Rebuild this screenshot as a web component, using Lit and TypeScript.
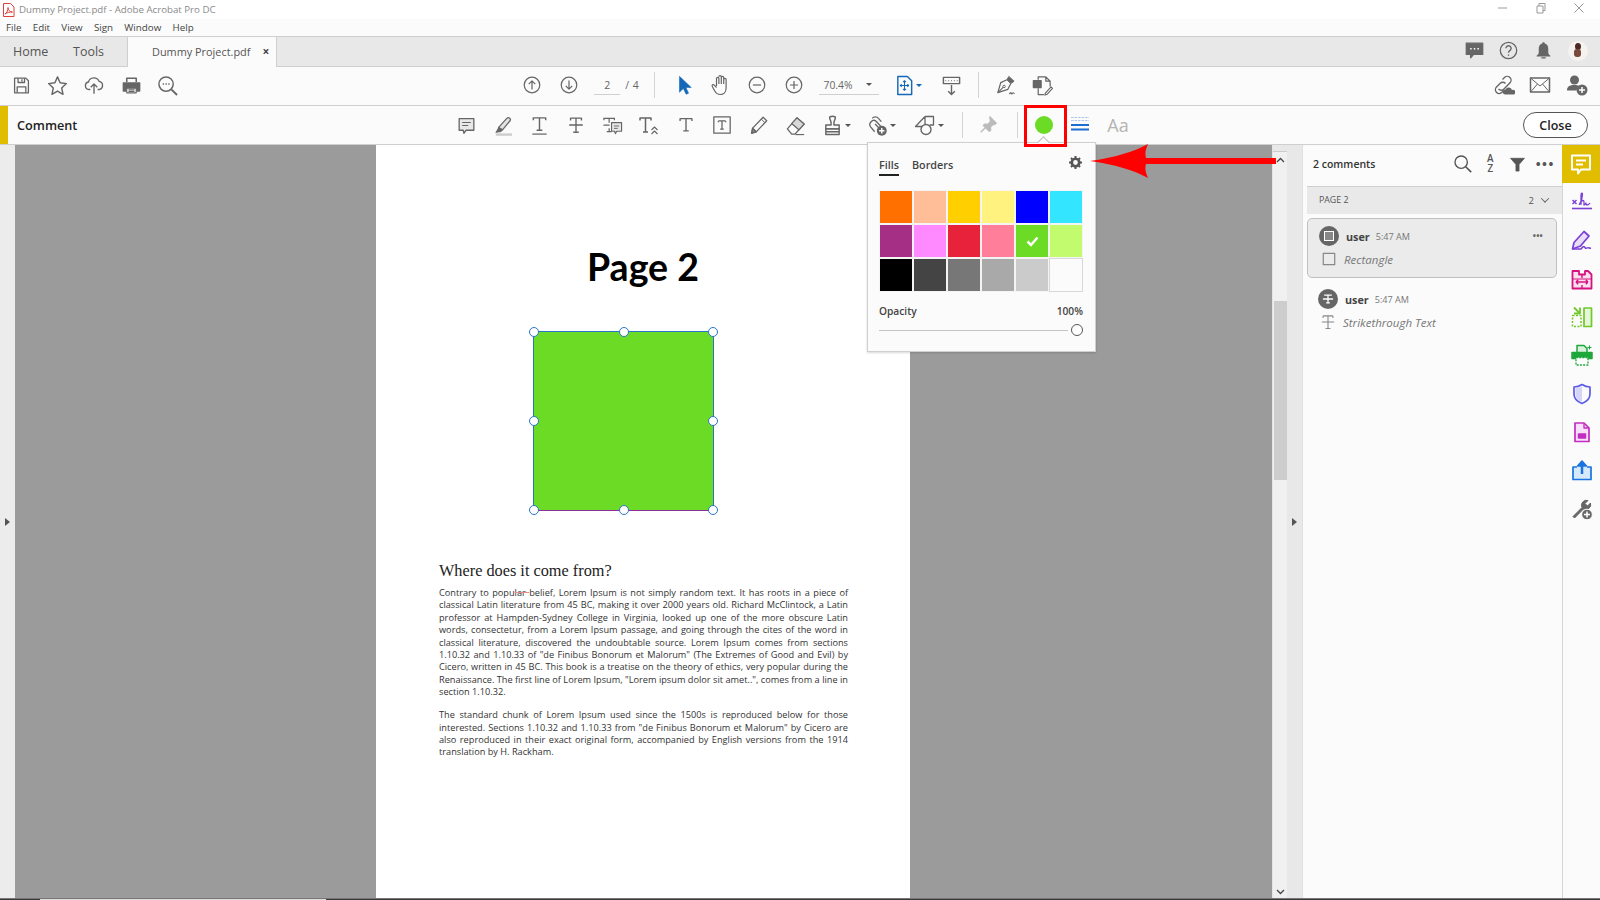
import { LitElement, html, css, svg } from "lit";
import { customElement } from "lit/decorators.js";

const ic = (c: unknown, s = 22) =>
  html`<svg class="i" width=${s} height=${s} viewBox="0 0 22 22" fill="none" stroke="#666" stroke-width="1.5" stroke-linejoin="round">${c}</svg>`;

const caret = html`<span class="caret"></span>`;
const T = svg`<path d="M4.500 4h13M11 4v13.500M8 17.500h6M4.500 3.500v3M17.500 3.500v3" stroke-width="1.500"/>`;

const I = {
  save: svg`<path d="M3 2.500h13l3 3v14H3z"/><path d="M7 2.500v5h7.500v-5M11.500 3.800v2.500M6 19.500v-7h10v7"/>`,
  star: svg`<polygon points="11,2 13.700,8.200 20.300,9 15.400,13.600 16.800,20.200 11,16.800 5.200,20.200 6.600,13.600 1.700,9 8.300,8.200"/>`,
  cloud: svg`<path d="M7 16H5.500a4.200 4.200 0 0 1-.6-8.300A6.200 6.200 0 0 1 16.600 7a4.600 4.600 0 0 1 .3 9H15"/><path d="M11 20.500V10M7.400 13.500L11 9.800l3.600 3.700"/>`,
  print: svg`<path d="M5.500 7V2.500h11V7" stroke-width="1.800"/><path d="M1.500 8h19v9.500h-3.200V14H4.700v3.500H1.500z" fill="#666"/><path d="M5.500 13.500h11v6h-11zM7.500 16h7M7.500 18h7" stroke-width="1.300"/>`,
  find: svg`<circle cx="9.500" cy="9.500" r="7.500"/><path d="M15 15l6 6" stroke-width="2"/><path d="M6 9.500h1.400M8.900 9.500h1.400M11.800 9.500h1.400" stroke-width="1.500"/>`,
  up: svg`<circle cx="11" cy="11" r="9.500"/><path d="M11 16.500V6M7 10l4-4 4 4"/>`,
  down: svg`<circle cx="11" cy="11" r="9.500"/><path d="M11 5.500V16M7 12l4 4 4-4"/>`,
  cursor: svg`<path d="M6 1.500V19l4.300-4.200 3 6.400 2.700-1.200-2.900-6.200H19z" fill="#1468b8" stroke="#1468b8" stroke-width=".6"/>`,
  hand: svg`<path d="M6.500 12V4.500a1.200 1.200 0 0 1 2.400 0V10m0-7.200a1.200 1.200 0 0 1 2.400 0V10m0-6.500a1.200 1.200 0 0 1 2.400 0V10m0-4.500a1.200 1.200 0 0 1 2.400 0V14c0 4-2.500 6.500-5.800 6.500-2.800 0-4.300-1.300-5.500-3.500l-2.500-4.500c-.8-1.500 1-2.600 2-1.300l2.200 2.300" stroke-width="1.200"/>`,
  minus: svg`<circle cx="11" cy="11" r="9.500"/><path d="M6 11h10"/>`,
  plus: svg`<circle cx="11" cy="11" r="9.500"/><path d="M6 11h10M11 6v10"/>`,
  fit: svg`<path d="M4 1.500h10l4.500 4.500v14.500H4z" stroke="#1468b8"/><path d="M11 6v10M6.500 11h9M9.500 7.500L11 6l1.500 1.500M9.500 14.500L11 16l1.500-1.500M8 9.500L6.500 11 8 12.500M14 9.500l1.500 1.500-1.500 1.500" stroke="#1468b8" stroke-width="1.100"/>`,
  scroll: svg`<path d="M2.500 2.500h17v6.500h-17z"/><path d="M5 5.500v1M8 5.500v1M11 5.500v1M14 5.500v1M17 5.500v1" stroke-width="1"/><path d="M11 10.500v10M7.500 17l3.500 3.500 3.500-3.500"/>`,
  sign: svg`<path d="M14.500 1.500l5.500 5-3.500 2.500-4-4z" fill="#666" stroke-width="1"/><path d="M12.500 5L6 8l-3 10.500L13.500 15 16.500 9" stroke-width="1.300"/><path d="M3 18.500l5.500-5.500" stroke-width="1.100"/><circle cx="9.500" cy="12" r="1.300" stroke-width="1"/><path d="M15 20c1-1.500 1.800-2 2-1s1 1 1.500 0 1 0 2 .5" stroke-width="1.200"/>`,
  docedit: svg`<path d="M6.500 5V2h8l4.500 4.500V12M14.500 2v4.500H19M6.500 14v6.500h6" stroke-width="1.300"/><path d="M1.500 6h8v7h-8z" fill="#666" stroke="#666"/><path d="M14 19l6-6.500 1.500 1.500-6 6.500-2 .5z" stroke-width="1.200"/>`,
  linkc: svg`<path d="M9.500 5.500l2-2a3.800 3.800 0 0 1 5.500 5.300L11 15a3.800 3.800 0 0 1-5.500 0M12.500 9.500a3.800 3.800 0 0 0-5.500 0l-3.500 3.500a3.800 3.800 0 0 0 5.500 5.300l1.500-1.500" stroke-width="1.400"/><path d="M12 20.500a2.500 2.500 0 0 1 .5-5 3.500 3.500 0 0 1 6.500.5 2.300 2.300 0 0 1 2 4.500z" fill="#666" stroke="none"/>`,
  mail: svg`<path d="M1.500 4h19v14h-19z"/><path d="M1.500 4L11 12l9.500-8M1.500 18l7-8M20.500 18l-7-8" stroke-width="1"/>`,
  useradd: svg`<circle cx="8.500" cy="6" r="4.500" fill="#666" stroke="none"/><path d="M1 16.500c0-4 2.500-5.500 7.500-5.500 2 0 3.500.3 4.500 1a6 6 0 0 0-2.500 4.500z" fill="#666" stroke="none"/><circle cx="16" cy="16" r="5.500" fill="#666" stroke="none"/><path d="M13 16h6M16 13v6" stroke="#fff" stroke-width="1.500"/>`,
  note: svg`<path d="M2.500 3h17v13.500h-9L8 20l-.8-3.500H2.500z" fill="#e8e8e8"/><path d="M6 7.500h10M6 11h7" stroke-width="1.300"/>`,
  hl: svg`<path d="M7 13L15.500 3.500c1-1 2-1 3-.2s1 2 .2 3L11 15.500z" stroke-width="1.300" fill="#e4e4e4"/><path d="M7 13l4 2.500-1.500 2-4.500.5-1 .5z" fill="#666" stroke="#666" stroke-width=".8"/><path d="M4 20.500h17" stroke="#ccc" stroke-width="2.500"/>`,
  tu: svg`<path d="M4.500 3h13M11 3v13M8 16h6M4.500 2.500v3M17.500 2.500v3" stroke-width="1.500"/><path d="M3.500 20h15" stroke-width="1.300"/>`,
  ts: svg`<path d="M5 3.500h12M11 3.500V19M8 19h6M5 3v3M17 3v3M3.500 11h15" stroke-width="1.500"/>`,
  tc: svg`<path d="M2 3.500h11M7.500 3.500V8M7.500 14v3.500M5 17.500h5M2 3v2.500M13 3v2.500M1.500 10.500h6.500" stroke-width="1.300"/><path d="M10 8h10.500v9h-5l-1.500 2.500-.7-2.500H10z" fill="#e8e8e8" stroke-width="1.200"/><path d="M12.500 11.500h5.500M12.500 14h4" stroke-width="1"/>`,
  ti: svg`<path d="M2 4h11M7.500 4v14M5 18h5M2 3.500v3M13 3.500v3" stroke-width="1.500"/><path d="M13.500 16l3-3 3 3M13.500 20l3-3 3 3" stroke-width="1.100"/>`,
  tb: svg`<path d="M2 2h18v18H2z" stroke-width="1.400"/><path d="M7 6.500h8M11 6.500v9M9 15.500h4M7 6.500V8M15 6.500V8" stroke-width="1.400"/>`,
  pencil: svg`<path d="M4 14.500L15.500 2.500l4 3.800L8 18.500l-5 1.500z" stroke-width="1.400"/><path d="M4 14.500l4 4M13.500 4.500l4 4" stroke-width="1.100"/><path d="M3 20l1-5.500 4 4z" fill="#888"/>`,
  eraser: svg`<path d="M2.500 14.500L12.500 3l7.500 6.500-9.500 10.500H7z" stroke-width="1.400"/><path d="M12.500 3l7.500 6.500-5.500 6-7.500-6.500z" fill="#d8d8d8" stroke-width="1.300"/><path d="M11 20.500h9" stroke-width="1.200"/>`,
  stamp: svg`<path d="M8 2.500c0-1.500 6-1.500 6 0 0 2.500-1.500 3.500-1.500 5.500v2.500H18v4H4v-4h5.500V8C9.500 6 8 5 8 2.500z" stroke-width="1.500"/><path d="M4 17.500h14M4 14.500h14v6H4z" stroke-width="1.500"/>`,
  attach: svg`<path d="M8 17.500L3.800 12.500C1 9 6 3.500 9.500 6.500l6 6.500c1.300 1.500-.5 3-1.800 1.800L8.500 9.500M15 7L12 3.500C10.500 1.500 7 1.500 5.500 3.500" stroke-width="1.400"/><circle cx="15.500" cy="16.500" r="5.200" fill="#666" stroke="none"/><path d="M12.700 16.500h5.600M15.500 13.700v5.600" stroke="#fff" stroke-width="1.500"/>`,
  shape: svg`<path d="M11 2.500L1.500 12.500h6.500M11 2.500V10M11 2.500h8.500v8.500H15.500" stroke-width="1.300"/><circle cx="12" cy="15.500" r="5" fill="#fbfbfb" stroke-width="1.400"/>`,
  pin: svg`<path d="M13 2l7 7-2 1.500-1-.5-3.500 3.500.5 3-1.500 1.500-6.500-6.500L7.500 10l3 .5L14 7l-.5-1z" fill="#bbb" stroke="#bbb"/><path d="M8 14l-5 5" stroke="#bbb" stroke-width="1.500"/>`,
  chat: svg`<path d="M1.500 2.500h19v13H10l-3.500 4v-4h-5z" fill="#666"/><path d="M6 9h1.700M10.200 9h1.700M14.400 9h1.700" stroke="#fff" stroke-width="1.700"/>`,
  bell: svg`<path d="M11 1.500c1 0 1.500.6 1.500 1.500 3 .8 4 3.200 4 6v4c0 2 1 3 2.500 4v1H3v-1c1.500-1 2.500-2 2.500-4V9c0-2.800 1-5.200 4-6 0-.9.500-1.500 1.500-1.500z" fill="#666" stroke="none"/><path d="M8.500 19.500h5" stroke-width="1.500"/>`,
  search: svg`<circle cx="9" cy="9" r="6.800" stroke="#555"/><path d="M14 14l6 6" stroke="#555" stroke-width="1.800"/>`,
  funnel: svg`<path d="M2 3h18l-7 8v8.500h-4V11z" fill="#555" stroke="#555" stroke-width="1"/>`,
  square: svg`<path d="M4 4h14v14H4z" stroke="#888"/>`,
  gear: svg`<circle cx="11" cy="11" r="5.500" stroke="#555" stroke-width="4"/><path d="M11 1.500v3M11 17.500v3M1.500 11h3M17.500 11h3M4.300 4.300l2.100 2.100M15.600 15.600l2.100 2.100M4.300 17.700l2.100-2.100M15.600 6.400l2.100-2.100" stroke="#555" stroke-width="3"/>`,
};

const rail = [
  svg`<path d="M1.500 9l4 4M5.500 9l-4 4" stroke="#7b3fd6" stroke-width="1.500"/><path d="M8 14c2-3 3.500-8 3.500-10.500S10 2 10 4.500V14M10 11c1-2 3-2 3 0V14c1 0 1.500-1 2-2 0 1.500.5 2 1 2s2-.5 3-2" stroke="#7b3fd6" stroke-width="1.300"/><path d="M1 17.500h20" stroke="#7b3fd6" stroke-width="1.600"/>`,
  svg`<path d="M1.500 20l1.500-6.500L13 2.500l5 4.500-8.500 10z" stroke="#7b3fd6" stroke-width="1.700" fill="#e9defa"/><path d="M2 20h8c1.500-2 2.500-3 3.500-2s1 2 2.500 1 2 0 4 .5" stroke="#7b3fd6" stroke-width="1.500"/>`,
  svg`<path d="M1.500 3h6.500v3.500h6V3h3l3.500 3.500v14H1.500z" stroke="#d6127f" stroke-width="1.800" fill="#fbe0ef"/><path d="M1.500 11h19" stroke="#d6127f" stroke-width="1"/><path d="M5 14h12M5 14l2.200-2.200M5 14l2.200 2.200M17 14l-2.200-2.200M17 14l-2.200 2.200M11 7v3M11 17v3.500" stroke="#d6127f" stroke-width="1.400"/>`,
  svg`<path d="M13 2h7.500v18.500H13z" stroke="#6fc92a" stroke-width="1.700" fill="#e6f6d8"/><path d="M1.500 9.500h8.500v11H1.500z" stroke="#6fc92a" stroke-width="1.500" stroke-dasharray="2 1.500"/><path d="M3 1.500l6 6M3 7.500H9V1.500" stroke="#6fc92a" stroke-width="1.800"/>`,
  svg`<path d="M6 8V1.500h7l3 3V8" stroke="#1ea83c" stroke-width="1.500" fill="#d8f2de"/><path d="M1 8.500h20v6H1z" fill="#1ea83c" stroke="#1ea83c"/><path d="M5 13.500h12v7.500H5z" stroke="#1ea83c" stroke-width="1.300" stroke-dasharray="2 1.200" fill="#fff"/><path d="M18.500 1.500v4M16.500 3.500h4" stroke="#1ea83c" stroke-width="1"/>`,
  svg`<path d="M11 1.500c3 2 5.500 2.500 8 2.500v7c0 4.500-3 7.500-8 9.500-5-2-8-5-8-9.500V4c2.500 0 5-.5 8-2.500z" stroke="#5b5be8" stroke-width="1.700"/><path d="M11 3v16c-4-1.800-6.500-4.300-6.500-8V5.300c2.500-.2 4.500-1 6.500-2.300z" fill="#d5d5fa" stroke="none"/>`,
  svg`<path d="M4 2h9l5 5v13.500H4z" stroke="#c22dc2" stroke-width="1.700" fill="#f8e0f8"/><path d="M7.500 13h7v4h-7z" fill="#c22dc2" stroke="#c22dc2"/><path d="M13 2v5h5" stroke="#c22dc2" stroke-width="1.300"/>`,
  svg`<path d="M6 8H2v12.500h18V8h-4" stroke="#1a73e0" stroke-width="1.700" fill="#d6e8fb"/><path d="M11 15V4" stroke="#1a73e0" stroke-width="2.500"/><path d="M6.500 7L11 2l4.500 5z" fill="#1a73e0" stroke="#1a73e0"/>`,
  svg`<path d="M2 18.500L11 9.500a5 5 0 0 1 6-7l-3 3 2.500 2.500 3-3a5 5 0 0 1-7 6l-9 9z" fill="#666" stroke="#666" stroke-width="1"/><circle cx="16" cy="16.500" r="5.300" fill="#666" stroke="#fff" stroke-width="1"/><path d="M13 16.500h6M16 13.500v6" stroke="#fff" stroke-width="1.500"/>`,
];

const swatches = [
  "#ff7000", "#ffbd98", "#ffcf00", "#fff27f", "#0000ff", "#33e5ff",
  "#a52f84", "#ff8aff", "#e8223a", "#ff7f9b", "#6bdb26", "#c3fb6e",
  "#000000", "#444444", "#777777", "#a9a9a9", "#cbcbcb", "#fbfbfb",
];

const para1 = [
  "classical Latin literature from 45 BC, making it over 2000 years old. Richard McClintock, a Latin",
  "professor at Hampden-Sydney College in Virginia, looked up one of the more obscure Latin",
  "words, consectetur, from a Lorem Ipsum passage, and going through the cites of the word in",
  "classical literature, discovered the undoubtable source. Lorem Ipsum comes from sections",
  '1.10.32 and 1.10.33 of "de Finibus Bonorum et Malorum" (The Extremes of Good and Evil) by',
  "Cicero, written in 45 BC. This book is a treatise on the theory of ethics, very popular during the",
  'Renaissance. The first line of Lorem Ipsum, "Lorem ipsum dolor sit amet..", comes from a line in',
];
const para2 = [
  "The standard chunk of Lorem Ipsum used since the 1500s is reproduced below for those",
  'interested. Sections 1.10.32 and 1.10.33 from "de Finibus Bonorum et Malorum" by Cicero are',
  "also reproduced in their exact original form, accompanied by English versions from the 1914",
];

@customElement("app-root")
export class AppRoot extends LitElement {
  static styles = css`
    :host { display: block; width: 1600px; height: 900px; position: relative; overflow: hidden;
      font-family: "Open Sans", "Noto Sans", sans-serif; background: #fbfbfb; }
    * { box-sizing: border-box; }
    .i { display: block; flex: none; }
    .root { display: flex; flex-direction: column; height: 900px; }
    .title { height: 19px; background: #fff; display: flex; align-items: center; padding-left: 2px; font-size: 9.700px; color: #8a8a8a; flex: none; }
    .title .txt { margin-left: 4px; }
    .wc { margin-left: auto; display: flex; padding: 0 2px 3px 0; }
    .wc span { width: 38px; display: flex; justify-content: center; }
    .menu { height: 18px; background: #fbfbfb; border-bottom: 1px solid #cfcfcf; display: flex; align-items: center; font-size: 9.800px; color: #444; padding-left: 6px; gap: 11.200px; flex: none; }
    .tabs { height: 30px; background: #e8e8e8; border-bottom: 1px solid #cfcfcf; display: flex; flex: none; color: #555; }
    .tab { display: flex; align-items: center; font-size: 12.500px; white-space: nowrap; }
    .home { margin-left: 13px; width: 60px; }
    .tools { width: 54px; }
    .active { width: 150px; background: #fbfbfb; border-left: 1px solid #cfcfcf; border-right: 1px solid #cfcfcf; margin-bottom: -1px; padding: 0 0 2px 24px; font-size: 10.900px; color: #555; }
    .active b { margin-left: 12px; font-size: 12px; color: #444; }
    .tabr { margin-left: auto; display: flex; align-items: center; padding: 0 5px 2px 0; }
    .tabr > div { width: 34.500px; display: flex; justify-content: center; }
    .avatar { width: 20px; height: 20px; border-radius: 50%; background: #f6f2f0; position: relative; overflow: hidden; }
    .avatar::before { content: ""; position: absolute; left: 7.500px; top: 2px; width: 6px; height: 7px; border-radius: 50%; background: #4a2a22; }
    .avatar::after { content: ""; position: absolute; left: 6px; top: 8px; width: 7px; height: 8px; border-radius: 3px; background: #7a4a3c; }
    .tb { height: 39px; background: #fbfbfb; border-bottom: 1px solid #cfcfcf; display: flex; align-items: center; flex: none; padding: 0 0 2px 3px; }
    .s { width: 36.600px; height: 26px; display: flex; align-items: center; justify-content: center; flex: none; }
    .s.w { width: 46px; gap: 2px; }
    .caret { width: 0; height: 0; border-left: 3px solid transparent; border-right: 3px solid transparent; border-top: 3.500px solid #555; flex: none; }
    .caret.blue { border-top-color: #1468b8; }
    .sep { width: 1px; height: 26px; background: #d4d4d4; flex: none; }
    .pg { width: 26px; text-align: center; border-bottom: 1px solid #d0d0d0; font-size: 10.500px; color: #666; line-height: 18px; margin-left: 7px; }
    .of { font-size: 10.500px; color: #666; margin-left: 5px; width: 29px; word-spacing: 1px; }
    .zoom { width: 60px; margin-left: 6.500px; border-bottom: 1px solid #d0d0d0; display: flex; align-items: center; font-size: 10.300px; color: #666; line-height: 18px; padding-left: 5px; gap: 14px; }
    .cb { height: 39px; background: #fbfbfb; border-bottom: 1px solid #cfcfcf; display: flex; align-items: center; flex: none; }
    .stripe { width: 8px; height: 38px; background: #e1bd00; flex: none; }
    .cbl { width: 440px; padding-left: 9px; font-size: 12.700px; font-weight: 600; color: #222; flex: none; }
    .aa { font-size: 18px; color: #b4b4b4; }
    .close { margin-left: auto; margin-right: 12px; width: 65px; height: 26px; border: 1.300px solid #555; border-radius: 13px; background: #fff; font-size: 12.500px; font-weight: 600; color: #222; display: flex; align-items: center; justify-content: center; }
    .main { flex: 1; display: flex; min-height: 0; }
    .lstrip { width: 15px; background: #ececec; display: flex; align-items: center; justify-content: center; flex: none; }
    .tri-r { width: 0; height: 0; border-top: 4.500px solid transparent; border-bottom: 4.500px solid transparent; border-left: 5px solid #555; }
    .doc { flex: 1; background: #9b9b9b; min-width: 0; padding-left: 361px; }
    .page { width: 534px; height: 100%; background: #fff; padding-top: 98px; }
    .ptitle { font-family: "Lato", "Open Sans", sans-serif; font-weight: 700; font-size: 37.500px; line-height: 48px; text-align: center; color: #000; }
    .shape { width: 181px; height: 180px; margin: 40px 0 0 157px; background: #6bdb26; border: 1.500px solid #2a74c4; border-bottom-color: #8a2f9c; position: relative; }
    .h { position: absolute; width: 10px; height: 10px; border-radius: 50%; background: #fff; border: 1.500px solid #2a74c4; transform: translate(-50%, -50%); }
    .body { padding-left: 63px; width: 472px; }
    .hd { font-family: "Liberation Serif", serif; font-size: 16.300px; line-height: 20px; color: #222; margin-top: 50px; }
    .tx { font-size: 9.200px; line-height: 12.400px; color: #333; margin-top: 6px; }
    .tx + .tx { margin-top: 10.500px; }
    .ln { text-align: justify; text-align-last: justify; }
    .ln.last { text-align-last: left; }
    .ln s { text-decoration-color: #e98c8c; }
    .sb { width: 15px; background: #f0f0f0; display: flex; flex-direction: column; align-items: center; flex: none; border-left: 1px solid #e4e4e4; }
    .sb .top { width: 14px; height: 7px; background: #e8e8e8; border-bottom: 1px solid #ccc; flex: none; }
    .sb .ar { font-size: 0; height: 149px; flex: none; padding-top: 5px; }
    .sb .thumb { width: 13px; height: 179px; background: #cdcdcd; flex: none; }
    .sb .dn { margin-top: auto; margin-bottom: 3px; }
    .rstrip { width: 15px; background: #e8e8e8; display: flex; align-items: center; justify-content: center; flex: none; }
    .panel { width: 260px; background: #fbfbfb; flex: none; display: flex; flex-direction: column; border-left: 1px solid #e0e0e0; }
    .phead { height: 41px; display: flex; align-items: center; padding: 0 0 3px 10px; flex: none; font-size: 10.500px; font-weight: 600; color: #333; }
    .pic { margin-left: auto; display: flex; align-items: center; padding-right: 3px; }
    .pic > div { width: 27.500px; display: flex; justify-content: center; }
    .pic .az { display: block; font-size: 9.800px; line-height: 10px; font-weight: 600; color: #555; text-align: center; }
    .dots { letter-spacing: 1.500px; font-size: 13px; font-weight: 700; color: #555; }
    .grp { margin-left: 4px; height: 28px; background: #e9e9e9; border-top: 1px solid #cfcfcf; display: flex; align-items: center; padding: 0 0 1px 12px; font-size: 8.800px; color: #555; flex: none; }
    .grp .n { margin-left: auto; margin-right: 8px; font-size: 9.500px; }
    .chev { width: 6px; height: 6px; border-right: 1px solid #666; border-bottom: 1px solid #666; transform: rotate(45deg) translate(-1px, -1px); margin-right: 14px; }
    .card { margin: 4px 5px 0 4px; padding: 7px 12px 0 12px; height: 60px; flex: none; }
    .card.sel { background: #ebebeb; border: 1px solid #c0c0c0; border-radius: 5px; }
    .card.plain { margin-top: 1px; padding-top: 10px; }
    .r1 { display: flex; align-items: center; }
    .av { width: 20px; height: 20px; border-radius: 50%; background: #666; display: flex; align-items: center; justify-content: center; flex: none; margin-left: -1px; }
    .av .sq { width: 10px; height: 10px; border: 1.500px solid #fff; background: #888; }
    .u { margin-left: 7px; font-size: 10.800px; font-weight: 700; color: #444; }
    .t { margin-left: 6px; font-size: 9.100px; color: #777; }
    .more { margin-left: auto; margin-right: 1px; font-size: 8.500px; font-weight: 700; letter-spacing: .2px; color: #666; line-height: 8px; }
    .r2 { display: flex; align-items: center; margin-top: 3px; margin-left: 0; height: 20px; }
    .r2 span { margin-left: 6px; font-style: italic; font-size: 11.500px; color: #777; }
    .rail { width: 38px; border-left: 1px solid #d6d6d6; background: #fbfbfb; flex: none; display: flex; flex-direction: column; align-items: center; }
    .rail .act { width: 38px; height: 38px; background: #e1bd00; display: flex; align-items: center; justify-content: center; flex: none; margin-left: -1px; }
    .rail .it { height: 38.300px; display: flex; align-items: center; justify-content: center; flex: none; }
    .foot { height: 2px; flex: none; display: flex; background: #3a3a3a; border-top: 1px solid #777; }
    .foot i { width: 286px; margin-left: 40px; background: #ddd; }

    .redbox { position: absolute; left: 1024px; top: 105px; width: 43px; height: 42px; border: 3px solid #f00; display: flex; align-items: center; justify-content: center; z-index: 3; padding: 0 3px 2px 0; }
    .dotc { width: 18px; height: 18px; background: #6bdb26; border-radius: 50%; }
    .pop { position: absolute; left: 867px; top: 142px; width: 229px; height: 210px; background: #fbfbfb; border: 1px solid #cfcfcf; box-shadow: 0 1px 2px rgba(0,0,0,.15); padding: 13px 12px 0 11px; z-index: 2; }
    .notch { position: absolute; left: 171px; top: -5px; width: 9px; height: 9px; background: #fbfbfb; border-left: 1px solid #bbb; border-top: 1px solid #bbb; transform: rotate(45deg); }
    .ptabs { display: flex; align-items: flex-start; font-size: 10.800px; font-weight: 600; color: #444; height: 34px; }
    .ptabs .on { width: 20px; height: 20px; border-bottom: 2px solid #222; line-height: 17px; white-space: nowrap; }
    .ptabs .off { margin-left: 13px; line-height: 17px; }
    .ptabs .g { margin-left: auto; margin-top: -1px; margin-right: 0; }
    .grid { display: grid; grid-template-columns: repeat(6, 34px); grid-auto-rows: 34px; }
    .c { border: .5px solid #f4f4f4; display: flex; align-items: center; justify-content: center; }
    .c.w { border: 1px solid #d8d8d8; }
    .op { display: flex; justify-content: space-between; font-size: 10.200px; font-weight: 600; color: #444; margin-top: 12px; }
    .sl { display: flex; align-items: center; margin-top: 6px; height: 12px; }
    .sl .bar { width: 189px; height: 1px; background: #c4c4c4; }
    .sl .kn { width: 12px; height: 12px; border-radius: 50%; border: 1.300px solid #555; background: #fff; margin-left: 3px; }
    .arrow { position: absolute; left: 1088px; top: 142px; z-index: 4; display: block; }
  `;

  render() {
    return html`<div class="root">
      <div class="title">
        <svg class="i" width="13" height="14" viewBox="0 0 13 14"><path d="M1.500 .500h7l3.500 3.500v9.500H1.500z" fill="#fff" stroke="#e0403a"/><path d="M3 11c2-1 3-4 3-6.500 0 2.500 2 4.500 4.500 4.500-3 0-5.500.5-7.500 2z" fill="none" stroke="#e0403a"/></svg>
        <span class="txt">Dummy Project.pdf - Adobe Acrobat Pro DC</span>
        <div class="wc">
          <span><svg class="i" width="12" height="12" viewBox="0 0 12 12"><path d="M1 6h9" stroke="#999"/></svg></span>
          <span><svg class="i" width="12" height="12" viewBox="0 0 12 12" fill="none" stroke="#999"><path d="M2 4h6v7H2zM4 4V1.500h6v7H8"/></svg></span>
          <span><svg class="i" width="12" height="12" viewBox="0 0 12 12" stroke="#999"><path d="M1.500 1.500l9 9M10.500 1.500l-9 9"/></svg></span>
        </div>
      </div>
      <div class="menu"><span>File</span><span>Edit</span><span>View</span><span>Sign</span><span>Window</span><span>Help</span></div>
      <div class="tabs">
        <div class="tab home">Home</div>
        <div class="tab tools">Tools</div>
        <div class="tab active">Dummy Project.pdf<b>×</b></div>
        <div class="tabr">
          <div>${ic(I.chat, 19)}</div><div>${ic(svg`<circle cx="11" cy="11" r="9.500"/><path d="M8 8.500a3 3 0 1 1 4.500 2.600c-1 .6-1.500 1-1.500 2.400M11 15.500v1.500" stroke-width="1.600"/>`, 19)}</div><div>${ic(I.bell, 19)}</div><div><div class="avatar"></div></div>
        </div>
      </div>
      <div class="tb">
        <div class="s">${ic(I.save, 19)}</div><div class="s">${ic(I.star, 21)}</div><div class="s">${ic(I.cloud, 20)}</div><div class="s">${ic(I.print, 19)}</div><div class="s">${ic(I.find, 21)}</div>
        <div class="s" style="margin-left:328px">${ic(I.up, 18)}</div><div class="s">${ic(I.down, 18)}</div>
        <div class="pg">2</div><div class="of">/ 4</div>
        <div class="sep"></div>
        <div class="s" style="margin-left:11px">${ic(I.cursor, 20)}</div><div class="s">${ic(I.hand, 22)}</div><div class="s" style="margin-left:-.5px">${ic(I.minus, 18)}</div><div class="s">${ic(I.plus, 18)}</div>
        <div class="zoom"><span>70.4%</span>${caret}</div>
        <div class="s" style="margin-left:10px;gap:1px;width:38px">${ic(I.fit, 21)}<span class="caret blue"></span></div>
        <div class="s" style="margin-left:7px">${ic(I.scroll, 21)}</div>
        <div class="sep" style="margin-left:8px"></div>
        <div class="s" style="margin-left:8px">${ic(I.sign, 21)}</div><div class="s">${ic(I.docedit, 21)}</div>
        <div class="s" style="margin-left:auto">${ic(I.linkc, 22)}</div><div class="s">${ic(I.mail, 22)}</div><div class="s" style="margin-right:5px">${ic(I.useradd, 22)}</div>
      </div>
      <div class="cb">
        <div class="stripe"></div><div class="cbl">Comment</div>
        <div class="s">${ic(I.note, 19)}</div><div class="s">${ic(I.hl, 21)}</div><div class="s">${ic(I.tu, 21)}</div><div class="s">${ic(I.ts, 20)}</div><div class="s">${ic(I.tc, 21)}</div><div class="s">${ic(I.ti, 22)}</div><div class="s">${ic(T, 20)}</div><div class="s">${ic(I.tb, 20)}</div><div class="s">${ic(I.pencil, 20)}</div><div class="s">${ic(I.eraser, 21)}</div>
        <div class="s w">${ic(I.stamp, 21)}${caret}</div><div class="s w" style="margin-left:-1px">${ic(I.attach, 21)}${caret}</div><div class="s w" style="margin-left:1px">${ic(I.shape, 22)}${caret}</div>
        <div class="sep" style="margin-left:10px"></div>
        <div class="s" style="margin-left:7px">${ic(I.pin, 20)}</div>
        <div class="sep" style="margin-left:10px"></div>
        <div class="s" style="margin-left:8px"></div>
        <div class="s">${ic(svg`<path d="M2 3.500h18M2 6.500h18" stroke="#a9c6e8" stroke-width="1" stroke-dasharray="2.500 1"/><path d="M2 11h18M2 15.500h18" stroke="#1a6fd0" stroke-width="2"/>`, 22)}</div>
        <div class="s aa" style="margin-left:1px">Aa</div>
        <div class="close">Close</div>
      </div>
      <div class="main">
        <div class="lstrip"><span class="tri-r"></span></div>
        <div class="doc">
          <div class="page">
            <div class="ptitle">Page 2</div>
            <div class="shape">
              ${[[0,0],[50,0],[100,0],[0,50],[100,50],[0,100],[50,100],[100,100]].map(([x,y]) => html`<span class="h" style="left:${x}%;top:${y}%"></span>`)}
            </div>
            <div class="body">
              <div class="hd">Where does it come from?</div>
              <div class="tx">
                <div class="ln">Contrary to popu<s>lar </s>belief, Lorem Ipsum is not simply random text. It has roots in a piece of</div>
                ${para1.map((l) => html`<div class="ln">${l}</div>`)}
                <div class="ln last">section 1.10.32.</div>
              </div>
              <div class="tx">
                ${para2.map((l) => html`<div class="ln">${l}</div>`)}
                <div class="ln last">translation by H. Rackham.</div>
              </div>
            </div>
          </div>
        </div>
        <div class="sb">
          <div class="top"></div>
          <div class="ar"><svg class="i" width="9" height="6" viewBox="0 0 9 6" fill="none" stroke="#444" stroke-width="1.300"><path d="M1 5l3.500-3.500L8 5"/></svg></div>
          <div class="thumb"></div>
          <div class="dn"><svg class="i" width="9" height="6" viewBox="0 0 9 6" fill="none" stroke="#444" stroke-width="1.300"><path d="M1 1l3.500 3.500L8 1"/></svg></div>
        </div>
        <div class="rstrip"><span class="tri-r"></span></div>
        <div class="panel">
          <div class="phead">2 comments
            <div class="pic">
              <div>${ic(I.search, 20)}</div>
              <div class="az">A<br />Z</div>
              <div>${ic(I.funnel, 17)}</div>
              <div class="dots">•••</div>
            </div>
          </div>
          <div class="grp">PAGE 2<span class="n">2</span><span class="chev"></span></div>
          <div class="card sel">
            <div class="r1"><span class="av"><span class="sq"></span></span><span class="u">user</span><span class="t">5:47 AM</span><span class="more">•••</span></div>
            <div class="r2">${ic(I.square, 18)}<span>Rectangle</span></div>
          </div>
          <div class="card plain">
            <div class="r1"><span class="av">${ic(svg`<path d="M5 5h12M11 5v12M8 17h6M3 11h16" stroke="#fff" stroke-width="2"/>`, 14)}</span><span class="u">user</span><span class="t">5:47 AM</span></div>
            <div class="r2">${ic(svg`<path d="M5 3.500h12M11 3.500V19M8 19h6M5 3.500V6M17 3.500V6M3.500 11h15" stroke="#888" stroke-width="1.300"/>`, 18)}<span>Strikethrough Text</span></div>
          </div>
        </div>
        <div class="rail">
          <div class="act">${ic(svg`<path d="M2 2.500h18v14h-9L8 20.500v-4H2z" fill="#e1bd00" stroke="#fff" stroke-width="2"/><path d="M6 7.500h10M6 11.500h7" stroke="#fff" stroke-width="1.800"/>`, 22)}</div>
          ${rail.map((r) => html`<div class="it">${ic(r, 22)}</div>`)}
        </div>
      </div>
      <div class="foot"><i></i></div>
    </div>
    <div class="pop">
      <div class="notch"></div>
      <div class="ptabs"><span class="on">Fills</span><span class="off">Borders</span><span class="g">${ic(I.gear, 15)}</span></div>
      <div class="grid">
        ${swatches.map((c, i) => html`<div class="c ${i === 17 ? "w" : ""}" style="background:${c}">${i === 10 ? html`<svg class="i" width="13" height="11" viewBox="0 0 13 11" fill="none" stroke="#fff" stroke-width="2.500"><path d="M1.500 5.500l3.500 3.500 6.500-7.500"/></svg>` : ""}</div>`)}
      </div>
      <div class="op"><span>Opacity</span><span>100%</span></div>
      <div class="sl"><div class="bar"></div><div class="kn"></div></div>
    </div>
    <div class="redbox"><div class="dotc"></div></div>
    <svg class="arrow" width="192" height="38" viewBox="0 0 192 38"><path d="M2 19C25 16 48 9 60 2C57 9 57 12 58 16H188V22H58C57 26 57 29 60 36C48 29 25 22 2 19z" fill="#f00"/></svg>`;
  }
}
